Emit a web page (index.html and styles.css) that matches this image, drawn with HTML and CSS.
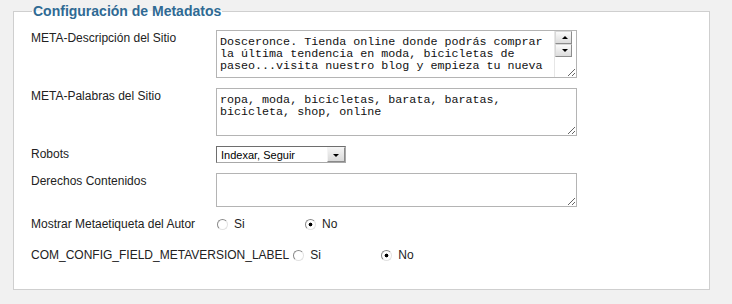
FILE: index.html
```html
<!DOCTYPE html>
<html lang="es">
<head>
    <meta charset="UTF-8">
    <meta name="viewport" content="width=device-width, initial-scale=1.0">
    <title>Configuración de Metadatos</title>
    <link rel="stylesheet" href="styles.css">
</head>
<body>
    <div class="page">
        <fieldset class="adminform">
            <legend>Configuración de Metadatos</legend>

            <div class="row">
                <label class="field-label" for="metadesc">META-Descripción del Sitio</label>
                <div class="textarea-wrap">
                    <textarea id="metadesc" class="text-area tall scrolling">Dosceronce. Tienda online donde podrás comprar la última tendencia en moda, bicicletas de paseo...visita nuestro blog y empieza tu nueva</textarea>
                    <div class="fake-scroll">
                        <span class="scroll-btn up"></span>
                        <span class="scroll-btn down"></span>
                    </div>
                </div>
            </div>

            <div class="row">
                <label class="field-label" for="metakeys">META-Palabras del Sitio</label>
                <textarea id="metakeys" class="text-area tall">ropa, moda, bicicletas, barata, baratas, bicicleta, shop, online</textarea>
            </div>

            <div class="row">
                <label class="field-label" for="robots">Robots</label>
                <div class="select-wrap">
                    <select id="robots" class="select-box">
                        <option>Indexar, Seguir</option>
                        <option>No indexar, Seguir</option>
                        <option>Indexar, No seguir</option>
                        <option>No indexar, No seguir</option>
                    </select>
                    <span class="select-btn"></span>
                </div>
            </div>

            <div class="row">
                <label class="field-label" for="rights">Derechos Contenidos</label>
                <textarea id="rights" class="text-area short"></textarea>
            </div>

            <div class="row row-radio">
                <span class="field-label">Mostrar Metaetiqueta del Autor</span>
                <label class="radio-opt"><input type="radio" name="metaauthor">Si</label>
                <label class="radio-opt"><input type="radio" name="metaauthor" checked>No</label>
            </div>

            <div class="row row-radio">
                <span class="field-label">COM_CONFIG_FIELD_METAVERSION_LABEL</span>
                <label class="radio-opt"><input type="radio" name="metaversion">Si</label>
                <label class="radio-opt"><input type="radio" name="metaversion" checked>No</label>
            </div>
        </fieldset>
    </div>
</body>
</html>
```

FILE: styles.css
```css
body {
    margin: 0;
    background: #f1f1f1;
    font-family: "Liberation Sans", Arial, sans-serif;
    font-size: 12px;
    color: #222;
}
.page {
    padding: 3px 22px 14px 13px;
}
.adminform {
    margin: 0;
    padding: 11px 0 10px 17px;
    border: 1px solid #cfcfcf;
    background: #fff;
    min-width: 0;
}
.adminform legend {
    margin-left: 1px;
    padding: 0 1px;
    font-size: 14px;
    line-height: 16px;
    font-weight: bold;
    color: #2f6a94;
}
.row {
    display: flex;
    align-items: flex-start;
    margin-bottom: 10px;
}
.field-label {
    flex: 0 0 auto;
    min-width: 182px;
    padding: 1px 3px 0 0;
    line-height: 14px;
}
.text-area {
    box-sizing: border-box;
    width: 361px;
    margin: 0;
    padding: 5px 3px;
    border: 1px solid #b4b4b4;
    font-family: "Liberation Mono", "Courier New", monospace;
    font-size: 11.7px;
    line-height: 12px;
    color: #111;
    background: #fff;
    overflow: hidden;
}
.text-area.tall { height: 48px; }
.text-area.short { height: 34px; }
.textarea-wrap {
    position: relative;
    display: flex;
}
.text-area.scrolling {
    padding-right: 21px;
}
.fake-scroll {
    position: absolute;
    top: 1px;
    right: 5px;
    bottom: 1px;
    width: 17px;
    border-left: 1px solid #e6e6e6;
    display: flex;
    flex-direction: column;
}
.scroll-btn {
    position: relative;
    height: 11px;
    border: 1px solid #9c9c9c;
    border-color: #d8d8d8 #8c8c8c #8c8c8c #d8d8d8;
    background: linear-gradient(#fafafa, #dcdcdc);
}
.scroll-btn::after {
    content: "";
    position: absolute;
    left: 6px;
    top: 4px;
    border-left: 3px solid transparent;
    border-right: 3px solid transparent;
}
.scroll-btn.up::after { border-bottom: 3px solid #000; }
.scroll-btn.down::after { border-top: 3px solid #000; }
.select-wrap {
    position: relative;
    width: 130px;
    height: 17px;
}
.select-box {
    -webkit-appearance: none;
    appearance: none;
    box-sizing: border-box;
    width: 130px;
    height: 17px;
    margin: 0;
    padding: 0 0 0 4px;
    border: 1px solid #7a7a7a;
    border-color: #6e6e6e #a8a8a8 #a8a8a8 #6e6e6e;
    border-radius: 0;
    background: #fff;
    font-family: "Liberation Sans", Arial, sans-serif;
    font-size: 11px;
    color: #000;
}
.select-btn {
    position: absolute;
    top: 1px;
    right: 1px;
    width: 16px;
    height: 13px;
    border: 1px solid;
    border-color: #f4f4f4 #8a8a8a #8a8a8a #f4f4f4;
    background: linear-gradient(#f4f4f4, #d9d9d9);
    pointer-events: none;
}
.select-btn::after {
    content: "";
    position: absolute;
    left: 5px;
    top: 6px;
    border-left: 3px solid transparent;
    border-right: 3px solid transparent;
    border-top: 3px solid #000;
}
.row-radio {
    align-items: center;
    height: 14px;
    margin-top: 2px;
    margin-bottom: 17px;
}
.row-radio .field-label {
    padding-top: 0;
}
.radio-opt {
    display: flex;
    align-items: center;
    width: 88px;
    line-height: 14px;
}
.radio-opt input {
    -webkit-appearance: none;
    appearance: none;
    box-sizing: border-box;
    width: 11px;
    height: 11px;
    margin: 0 6px 0 1px;
    border: 1px solid;
    border-color: #8a8a8a #e2e2e2 #e2e2e2 #8a8a8a;
    border-radius: 50%;
    background: #fff;
}
.radio-opt input:checked {
    background: radial-gradient(circle, #000 0, #000 1.6px, #fff 2.2px);
}
```
